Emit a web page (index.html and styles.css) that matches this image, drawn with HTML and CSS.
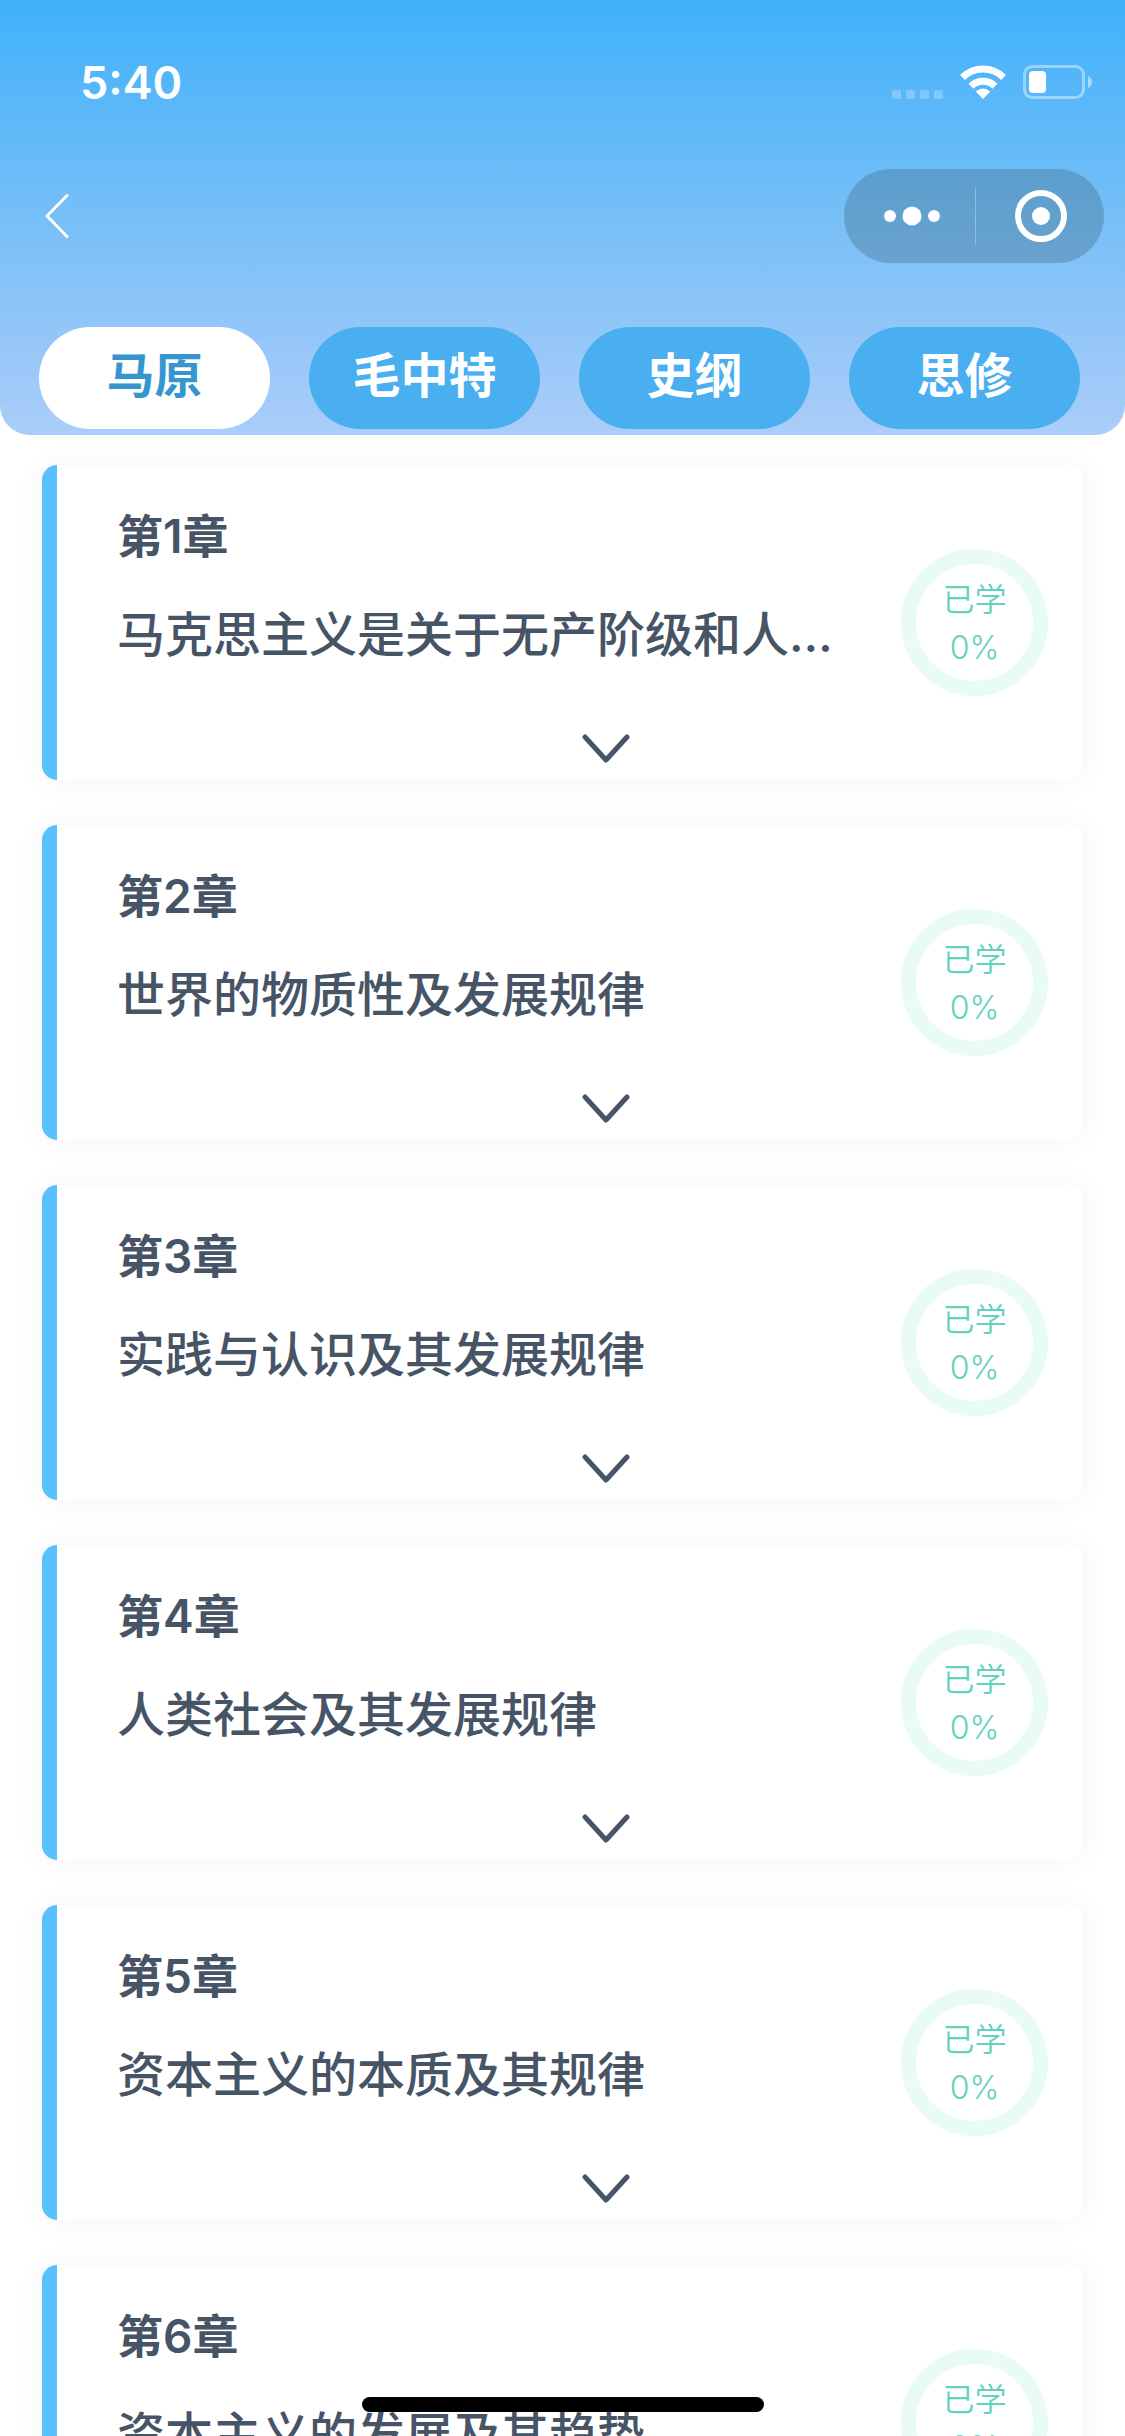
FILE: index.html
```html
<!DOCTYPE html>
<html lang="zh-CN">
<head>
<meta charset="utf-8">
<meta name="viewport" content="width=device-width, initial-scale=1">
<title>章节学习</title>
<link rel="stylesheet" href="styles.css">
</head>
<body>
<svg class="symbols" aria-hidden="true">
  <symbol id="chevron-down" viewBox="0 0 48 30">
    <path d="M3 3 24 26 45 3" fill="none" stroke="currentColor" stroke-width="5" stroke-linecap="round" stroke-linejoin="round"/>
  </symbol>
</svg>
<div class="app">
  <header class="header">
    <div class="status">
      <time class="clock">5:40</time>
      <div class="status-icons">
        <span class="signal"><i></i><i></i><i></i><i></i></span>
        <svg class="wifi" viewBox="0 0 46 34" aria-hidden="true">
          <g fill="none" stroke="#fff" stroke-width="7">
            <path d="M2.5 12.6A29 29 0 0 1 43.5 12.6"/>
            <path d="M11 21.300A17 17 0 0 1 35 21.300"/>
          </g>
          <path d="M23 34 15.800 26.400Q23 20.600 30.200 26.400Z" fill="#fff"/>
        </svg>
        <svg class="battery" viewBox="0 0 70 34" aria-hidden="true">
          <rect x="1.500" y="1.500" width="59" height="31" rx="8" fill="none" stroke="#fff" stroke-opacity=".42" stroke-width="3"/>
          <rect x="6" y="6" width="17" height="22" rx="4" fill="#fff"/>
          <path d="M65 11Q69 13 69 17T65 23Z" fill="#fff" fill-opacity=".5"/>
        </svg>
      </div>
    </div>
    <div class="nav">
      <button class="back" type="button" aria-label="返回">
        <svg viewBox="0 0 26 46" aria-hidden="true"><path d="M23 2.500 3 23 23 43.500" fill="none" stroke="#fff" stroke-width="3" stroke-linecap="round" stroke-linejoin="round"/></svg>
      </button>
      <div class="capsule">
        <button type="button" aria-label="更多">
          <svg width="56" height="20" viewBox="0 0 56 20" aria-hidden="true"><g fill="#fff"><circle cx="6" cy="10" r="6"/><circle cx="28" cy="10" r="9.500"/><circle cx="50" cy="10" r="6"/></g></svg>
        </button>
        <button type="button" aria-label="关闭">
          <svg width="52" height="52" viewBox="0 0 52 52" aria-hidden="true"><circle cx="26" cy="26" r="23" fill="none" stroke="#fff" stroke-width="6"/><circle cx="26" cy="26" r="9" fill="#fff"/></svg>
        </button>
      </div>
    </div>
    <nav class="tabs" aria-label="科目">
      <button class="tab tab-active" type="button" aria-current="true">马原</button>
      <button class="tab" type="button">毛中特</button>
      <button class="tab" type="button">史纲</button>
      <button class="tab" type="button">思修</button>
    </nav>
  </header>
  <main class="chapters">
    <article class="card">
      <div class="text"><h2>第1章</h2><p>马克思主义是关于无产阶级和人类解放的科学</p></div>
      <div class="ring"><span>已学</span><span>0%</span></div>
      <button class="toggle" type="button" aria-label="展开第1章"><svg><use href="#chevron-down"/></svg></button>
    </article>
    <article class="card">
      <div class="text"><h2>第2章</h2><p>世界的物质性及发展规律</p></div>
      <div class="ring"><span>已学</span><span>0%</span></div>
      <button class="toggle" type="button" aria-label="展开第2章"><svg><use href="#chevron-down"/></svg></button>
    </article>
    <article class="card">
      <div class="text"><h2>第3章</h2><p>实践与认识及其发展规律</p></div>
      <div class="ring"><span>已学</span><span>0%</span></div>
      <button class="toggle" type="button" aria-label="展开第3章"><svg><use href="#chevron-down"/></svg></button>
    </article>
    <article class="card">
      <div class="text"><h2>第4章</h2><p>人类社会及其发展规律</p></div>
      <div class="ring"><span>已学</span><span>0%</span></div>
      <button class="toggle" type="button" aria-label="展开第4章"><svg><use href="#chevron-down"/></svg></button>
    </article>
    <article class="card">
      <div class="text"><h2>第5章</h2><p>资本主义的本质及其规律</p></div>
      <div class="ring"><span>已学</span><span>0%</span></div>
      <button class="toggle" type="button" aria-label="展开第5章"><svg><use href="#chevron-down"/></svg></button>
    </article>
    <article class="card">
      <div class="text"><h2>第6章</h2><p>资本主义的发展及其趋势</p></div>
      <div class="ring"><span>已学</span><span>0%</span></div>
      <button class="toggle" type="button" aria-label="展开第6章"><svg><use href="#chevron-down"/></svg></button>
    </article>
  </main>
  <div class="home-indicator"></div>
</div>
</body>
</html>
```
FILE: styles.css
```css
* {
  box-sizing: border-box;
}

body,
h2,
p {
  margin: 0;
}

body {
  background: #fff;
  color: #465466;
  font-family: Inter, "Noto Sans CJK SC", sans-serif;
}

button {
  padding: 0;
  border: 0;
  background: none;
  color: inherit;
  font: inherit;
}

svg {
  display: block;
}

.symbols {
  display: none;
}

.app {
  display: flex;
  flex-direction: column;
  height: 100vh;
  overflow: hidden;
}

/* Header */

.header {
  position: relative;
  z-index: 1;
  flex: none;
  padding-bottom: 6px;
  border-radius: 0 0 30px 30px;
  background: linear-gradient(#3fb1fa, #77bff7 50%, #abcdf9);
  color: #fff;
}

.status {
  display: flex;
  align-items: center;
  justify-content: space-between;
  height: 164px;
  padding: 0 32px 0 80px;
}

.clock {
  font-size: 45px;
  font-weight: 600;
}

.status-icons {
  display: flex;
  align-items: flex-end;
  gap: 17px;
}

.signal {
  display: flex;
  gap: 5px;
}

.signal i {
  width: 9px;
  height: 9px;
  border-radius: 2px;
  background: rgba(255, 255, 255, 0.25);
}

.wifi {
  width: 46px;
  height: 34px;
}

.battery {
  width: 70px;
  height: 34px;
}

.nav {
  display: flex;
  align-items: center;
  justify-content: space-between;
  height: 104px;
  padding: 0 21px 0 44px;
}

.back svg {
  width: 26px;
  height: 46px;
}

.capsule {
  display: flex;
  width: 260px;
  height: 94px;
  border-radius: 47px;
  background: rgba(70, 115, 145, 0.4);
}

.capsule button {
  display: flex;
  flex: 1;
  align-items: center;
  justify-content: center;
  padding-left: 4px;
}

.capsule button + button {
  padding-left: 2px;
  background: linear-gradient(rgba(255, 255, 255, 0.3), rgba(255, 255, 255, 0.3)) left center / 1px 56px no-repeat;
}

.tabs {
  display: flex;
  gap: 39px;
  padding: 59px 45px 0 39px;
}

.tab {
  flex: 1;
  height: 102px;
  padding-bottom: 4px;
  border-radius: 51px;
  background: #49aff0;
  font-size: 48px;
  font-weight: 600;
  line-height: 60px;
}

.tab-active {
  background: #fff;
  color: #3596cf;
}

/* Chapter list */

.chapters {
  display: flex;
  flex: 1;
  flex-direction: column;
  gap: 45px;
  min-height: 0;
  padding: 30px 42px;
  overflow-y: auto;
  scrollbar-width: none;
}

.card {
  display: grid;
  flex: none;
  grid-template-rows: 1fr 62px;
  grid-template-columns: minmax(0, 1fr) 147px;
  height: 315px;
  padding: 0 35px 0 60px;
  border-left: 15px solid #5ac1ff;
  border-radius: 15px;
  background: #fff;
  box-shadow: 0 0 30px rgba(0, 0, 0, 0.05);
}

.text {
  grid-row: 1;
  grid-column: 1;
  padding: 46px 60px 0 0;
}

.text h2 {
  font-size: 46px;
  font-weight: 600;
  line-height: 50px;
}

.text p {
  margin-top: 44px;
  overflow: hidden;
  font-size: 48px;
  font-weight: 500;
  line-height: 60px;
  text-overflow: ellipsis;
  white-space: nowrap;
}

.ring {
  display: flex;
  grid-row: 1 / 3;
  grid-column: 2;
  flex-direction: column;
  align-items: center;
  align-self: center;
  justify-content: center;
  height: 147px;
  padding-top: 2px;
  border: 15px solid #e8fbf7;
  border-radius: 50%;
  color: #62d2bc;
  font-size: 32px;
  font-weight: 350;
  line-height: 48px;
}

.toggle {
  display: flex;
  grid-row: 2;
  grid-column: 1 / 3;
  align-items: center;
  justify-content: center;
  padding-left: 46px;
}

.toggle svg {
  width: 48px;
  height: 30px;
}

.home-indicator {
  position: fixed;
  z-index: 2;
  bottom: 24px;
  left: 50%;
  width: 402px;
  height: 15px;
  border-radius: 8px;
  background: #000;
  transform: translateX(-50%);
}
```
